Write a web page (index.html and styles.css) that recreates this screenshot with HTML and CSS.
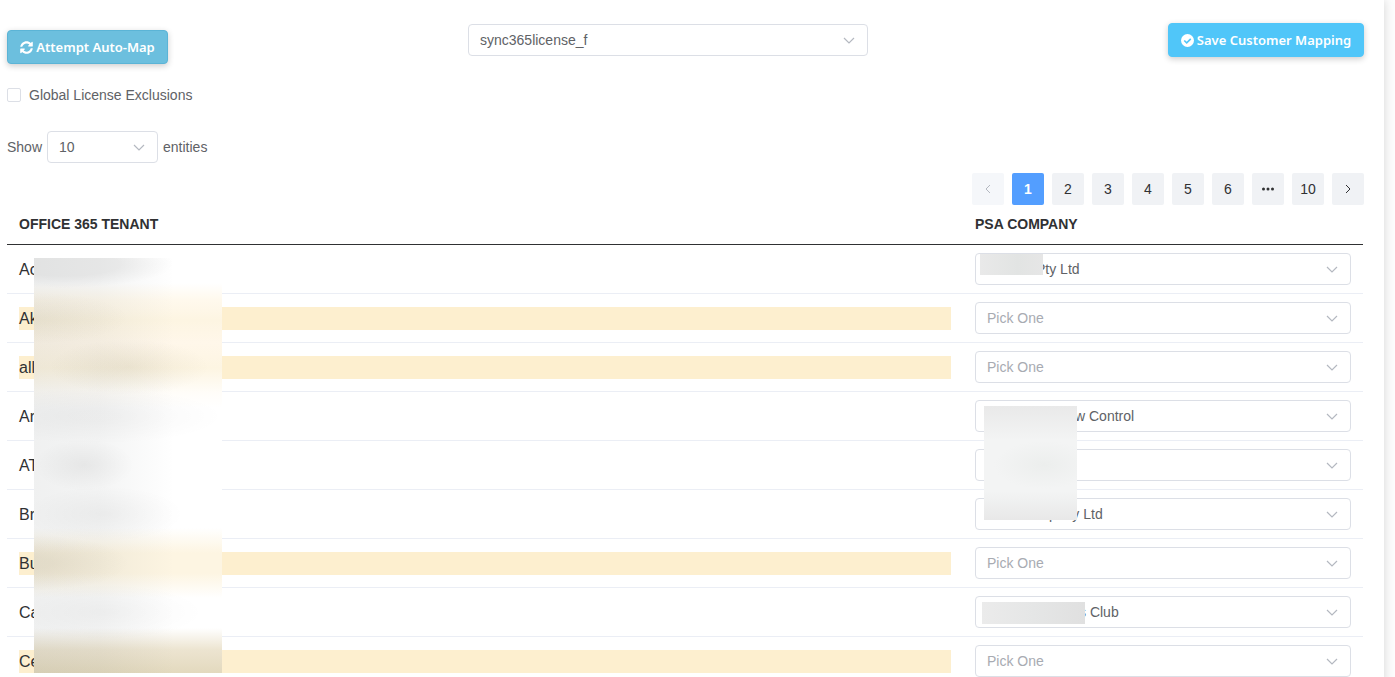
FILE: index.html
```html
<!DOCTYPE html>
<html lang="en">
<head>
  <meta charset="UTF-8" />
  <meta name="viewport" content="width=device-width, initial-scale=1.0"/>
  <title>Customer Mapping</title>
  <link rel="stylesheet" href="styles.css">
</head>
<body>

  <!-- Shared icons -->
  <svg class="icon-defs" aria-hidden="true">
    <symbol id="chevron-down" viewBox="0 0 14 14">
      <path d="M2 5l5 5 5-5" fill="none" stroke="currentColor" stroke-width="1.2"/>
    </symbol>
  </svg>

  <main class="card">

    <!-- Toolbar -->
    <div class="toolbar">
      <button class="btn btn-info" type="button">
        <svg class="btn-icon" viewBox="0 0 512 512" aria-hidden="true"><path fill="currentColor" d="M371 141c-31-30-72-47-115-47-78 0-145 53-164 127-1 5-6 9-12 9H23c-8 0-13-7-12-14C32 98 134 8 256 8c66 0 126 26 171 69l36-36c15-15 41-4 41 17v134c0 13-11 24-24 24H346c-21 0-32-26-17-41l42-34zM32 296h134c21 0 32 26 17 41l-42 42c31 29 72 46 115 46 78 0 145-53 164-127 1-5 6-9 12-9h57c8 0 13 7 12 14-21 118-123 201-245 201-66 0-126-26-171-69l-36 36c-15 15-41 4-41-17V320c0-13 11-24 24-24z"/></svg>
        Attempt Auto-Map
      </button>

      <div class="select select-license">
        <select aria-label="License field">
          <option>sync365license_f</option>
        </select>
        <svg><use href="#chevron-down"/></svg>
      </div>

      <button class="btn btn-save" type="button">
        <svg class="btn-icon" viewBox="0 0 16 16" aria-hidden="true"><circle cx="8" cy="8" r="8" fill="currentColor"/><path class="tick" d="M4 8l3 3 5-5" fill="none" stroke-width="2"/></svg>
        Save Customer Mapping
      </button>
    </div>

    <label class="exclusions">
      <input type="checkbox">
      Global License Exclusions
    </label>

    <div class="page-size">
      <label for="page-size">Show</label>
      <div class="select select-size">
        <select id="page-size">
          <option>10</option>
        </select>
        <svg><use href="#chevron-down"/></svg>
      </div>
      <span>entities</span>
    </div>

    <!-- Pagination -->
    <nav class="pager" aria-label="Pages">
      <button type="button" disabled aria-label="Previous page"><svg viewBox="0 0 12 12"><path d="M8 2L4 6l4 4" fill="none" stroke="currentColor"/></svg></button>
      <button type="button" class="active">1</button>
      <button type="button">2</button>
      <button type="button">3</button>
      <button type="button">4</button>
      <button type="button">5</button>
      <button type="button">6</button>
      <button type="button" aria-label="More pages"><svg viewBox="0 0 12 12"><g fill="currentColor"><circle cx="1.5" cy="6" r="1.5"/><circle cx="6" cy="6" r="1.5"/><circle cx="10.5" cy="6" r="1.5"/></g></svg></button>
      <button type="button">10</button>
      <button type="button" aria-label="Next page"><svg viewBox="0 0 12 12"><path d="M4 2l4 4-4 4" fill="none" stroke="currentColor"/></svg></button>
    </nav>

    <!-- Mapping table -->
    <div class="table-wrap">
      <table>
        <thead>
          <tr>
            <th>OFFICE 365 TENANT</th>
            <th class="col-company">PSA COMPANY</th>
          </tr>
        </thead>
        <tbody>
          <tr>
            <td><span class="tenant">Ac</span></td>
            <td><div class="select"><select class="indent-sm" aria-label="PSA company"><option>Pty Ltd</option></select><svg><use href="#chevron-down"/></svg></div></td>
          </tr>
          <tr>
            <td><span class="tenant unmapped">Ak</span></td>
            <td><div class="select"><select class="empty" aria-label="PSA company"><option>Pick One</option></select><svg><use href="#chevron-down"/></svg></div></td>
          </tr>
          <tr>
            <td><span class="tenant unmapped">all</span></td>
            <td><div class="select"><select class="empty" aria-label="PSA company"><option>Pick One</option></select><svg><use href="#chevron-down"/></svg></div></td>
          </tr>
          <tr>
            <td><span class="tenant">Ar</span></td>
            <td><div class="select"><select class="indent-lg" aria-label="PSA company"><option>w Control</option></select><svg><use href="#chevron-down"/></svg></div></td>
          </tr>
          <tr>
            <td><span class="tenant">AT</span></td>
            <td><div class="select"><select aria-label="PSA company"><option></option></select><svg><use href="#chevron-down"/></svg></div></td>
          </tr>
          <tr>
            <td><span class="tenant">Br</span></td>
            <td><div class="select"><select class="indent-md" aria-label="PSA company"><option>pany Ltd</option></select><svg><use href="#chevron-down"/></svg></div></td>
          </tr>
          <tr>
            <td><span class="tenant unmapped">Bu</span></td>
            <td><div class="select"><select class="empty" aria-label="PSA company"><option>Pick One</option></select><svg><use href="#chevron-down"/></svg></div></td>
          </tr>
          <tr>
            <td><span class="tenant">Ca</span></td>
            <td><div class="select"><select class="indent-xl" aria-label="PSA company"><option>s Club</option></select><svg><use href="#chevron-down"/></svg></div></td>
          </tr>
          <tr>
            <td><span class="tenant unmapped">Ce</span></td>
            <td><div class="select"><select class="empty" aria-label="PSA company"><option>Pick One</option></select><svg><use href="#chevron-down"/></svg></div></td>
          </tr>
        </tbody>
      </table>

      <!-- Privacy masks over the customer names -->
      <div class="mask mask-tenants"></div>
      <div class="mask mask-company-1"></div>
      <div class="mask mask-company-2"></div>
      <div class="mask mask-company-3"></div>
    </div>
  </main>

</body>
</html>
```

FILE: styles.css
```css
* {
  box-sizing: border-box;
}

body {
  margin: 0;
  background: #fdfdfd;
  font-family: "Liberation Sans", Arial, sans-serif;
  font-size: 14px;
  color: #606266;
}

button,
select {
  font-family: inherit;
  font-size: 14px;
}

.icon-defs {
  display: none;
}

.card {
  min-height: 100vh;
  margin-right: 11px;
  padding: 23px 20px 0 7px;
  background: #fff;
  box-shadow: 0 0 10px rgba(0, 0, 0, 0.16);
}

/* Toolbar */
.toolbar {
  display: flex;
  justify-content: space-between;
  align-items: flex-start;
}

.btn {
  display: flex;
  align-items: center;
  justify-content: center;
  gap: 3px;
  height: 34px;
  padding: 0 11px;
  border: 1px solid;
  border-radius: 4px;
  color: #fff;
  font-family: "Noto Sans", "Open Sans", sans-serif;
  font-size: 13px;
  font-weight: 600;
  white-space: nowrap;
  box-shadow: 0 2px 6px rgba(0, 0, 0, 0.2);
  cursor: pointer;
}

.btn-icon {
  flex: none;
  width: 13px;
  height: 13px;
}

.btn-info {
  min-width: 161px;
  margin-top: 7px;
  background: #6cbfde;
  border-color: #5bb4d6;
}

.btn-save {
  min-width: 196px;
  background: #50c6f9;
  border-color: #50c6f9;
}

.tick {
  stroke: #50c6f9;
}

/* Select: the arrow shares the grid cell with the field */
.select {
  display: grid;
  align-items: center;
}

.select select,
.select svg {
  grid-area: 1 / 1;
}

.select select {
  width: 100%;
  height: 32px;
  padding: 0 30px 0 11px;
  border: 1px solid #dcdfe6;
  border-radius: 4px;
  background: #fff;
  color: #606266;
  appearance: none;
}

.select svg {
  justify-self: end;
  width: 14px;
  height: 14px;
  margin-right: 12px;
  color: #b4b8c0;
  pointer-events: none;
}

.select .empty {
  color: #a8abb2;
}

.select .indent-sm {
  padding-left: 60px;
}

.select .indent-md {
  padding-left: 73px;
}

.select .indent-lg {
  padding-left: 99px;
}

.select .indent-xl {
  padding-left: 103px;
}

.select-license {
  width: 400px;
  margin-top: 1px;
}

.select-size {
  width: 111px;
}

/* Filters */
.exclusions {
  display: flex;
  align-items: center;
  gap: 8px;
  width: fit-content;
  height: 32px;
  margin-top: 15px;
}

.exclusions input {
  width: 14px;
  height: 14px;
  margin: 0;
  border: 1px solid #dcdfe6;
  border-radius: 2px;
  background: #fff;
  appearance: none;
}

.page-size {
  display: flex;
  align-items: center;
  gap: 5px;
  margin-top: 20px;
}

/* Pagination */
.pager {
  display: flex;
  justify-content: flex-end;
  gap: 8px;
  margin-top: 10px;
}

.pager button {
  display: flex;
  align-items: center;
  justify-content: center;
  width: 32px;
  height: 32px;
  padding: 0;
  border: 0;
  border-radius: 2px;
  background: #f0f2f5;
  color: #303133;
}

.pager button:disabled {
  background: #f5f7fa;
  color: #b4b8c0;
}

.pager .active {
  background: #539eff;
  color: #fff;
  font-weight: 700;
}

.pager svg {
  width: 12px;
  height: 12px;
}

/* Table */
.table-wrap {
  position: relative;
}

table {
  width: 100%;
  border-collapse: separate;
  border-spacing: 0;
  padding-right: 1px;
}

th {
  height: 40px;
  padding: 0 12px 2px;
  border-bottom: 1px solid #303133;
  color: #303133;
  font-weight: 700;
  text-align: left;
}

.col-company {
  width: 400px;
}

td {
  padding: 8px 12px;
  border-bottom: 1px solid #ebeef5;
}

.tenant {
  display: block;
  color: #303133;
  font-size: 16px;
  line-height: 23px;
}

.unmapped {
  background: #fdefcf;
}

/* Masks */
.mask {
  position: absolute;
}

.mask-tenants {
  top: 53px;
  left: 27px;
  width: 188px;
  height: 415px;
  background:
    radial-gradient(110px 24px at 30px 6px, rgba(0, 0, 0, 0.06) 50%, transparent),
    radial-gradient(95px 26px at 0 60px, rgba(90, 80, 50, 0.06), transparent),
    radial-gradient(80px 28px at 95px 109px, rgba(90, 80, 50, 0.08), transparent),
    radial-gradient(130px 28px at 60px 158px, rgba(0, 0, 0, 0.03) 20%, transparent),
    radial-gradient(50px 26px at 50px 207px, rgba(0, 0, 0, 0.05), transparent),
    radial-gradient(80px 28px at 70px 256px, rgba(0, 0, 0, 0.04), transparent),
    radial-gradient(95px 28px at 0 305px, rgba(90, 80, 50, 0.08) 20%, transparent),
    radial-gradient(100px 28px at 70px 354px, rgba(0, 0, 0, 0.03), transparent),
    linear-gradient(90deg, rgba(60, 70, 70, 0.08), rgba(60, 70, 70, 0.06) 35%, transparent 75%),
    linear-gradient(
      #fff 25px,
      #fff9ed 42px,
      #fdf5e2 62px,
      #fff7ea 85px,
      #fdf5e2 110px,
      #fffdf9 135px,
      #fff 150px,
      #fff 270px,
      #fdf5e2 295px,
      #fdf5e2 315px,
      #fff 340px,
      #fff 370px,
      #ece4d0 392px,
      #e3d9be 415px
    );
}

.mask-company-1 {
  top: 49px;
  left: 973px;
  width: 63px;
  height: 21px;
  background: linear-gradient(90deg, #e9e9e9, #e2e4e3 60%, #e6e6e6);
}

.mask-company-2 {
  top: 201px;
  left: 977px;
  width: 93px;
  height: 114px;
  background:
    radial-gradient(50px 24px at 60px 59px, #eceeed, transparent),
    linear-gradient(#e9e9e9, #f3f4f4 30%, #f3f4f4 75%, #e8e8e8);
}

.mask-company-3 {
  top: 397px;
  left: 975px;
  width: 103px;
  height: 22px;
  background: linear-gradient(90deg, #ebebeb, #e5e6e6 50%, #e0e0e0);
}
```
